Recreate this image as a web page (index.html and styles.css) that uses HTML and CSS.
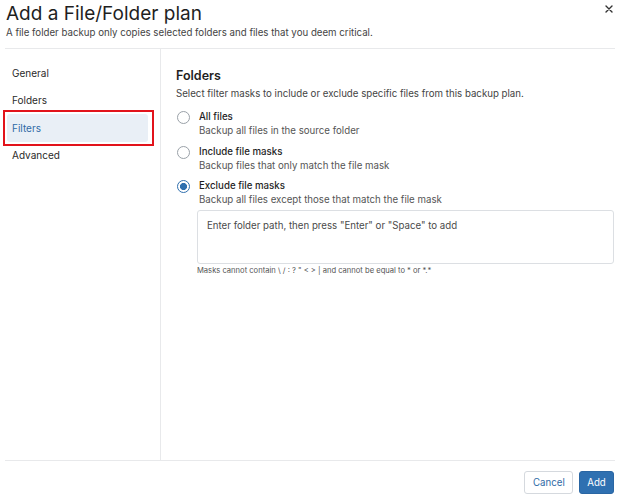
FILE: index.html
```html
<!DOCTYPE html>
<html lang="en">
<head>
<meta charset="utf-8">
<title>Add a File/Folder plan</title>
<link rel="stylesheet" href="styles.css">
</head>
<body>
<div class="dialog">
  <header class="header">
    <div class="title-row">
      <h1 class="title">Add a File/Folder plan</h1>
      <button class="close" aria-label="Close">
        <svg width="8" height="8" viewBox="0 0 8 8"><path d="M1 1L7 7M7 1L1 7" stroke="#333" stroke-width="1.4" stroke-linecap="round"/></svg>
      </button>
    </div>
    <p class="subtitle">A file folder backup only copies selected folders and files that you deem critical.</p>
  </header>
  <div class="body">
    <nav class="nav">
      <div class="nav-item">General</div>
      <div class="nav-item">Folders</div>
      <div class="nav-item active">Filters</div>
      <div class="nav-item">Advanced</div>
    </nav>
    <section class="content">
      <h2 class="section-title">Folders</h2>
      <p class="section-desc">Select filter masks to include or exclude specific files from this backup plan.</p>
      <div class="options">
        <label class="option">
          <span class="radio"></span>
          <span class="option-text">
            <span class="option-label">All files</span>
            <span class="option-desc">Backup all files in the source folder</span>
          </span>
        </label>
        <label class="option">
          <span class="radio"></span>
          <span class="option-text">
            <span class="option-label">Include file masks</span>
            <span class="option-desc">Backup files that only match the file mask</span>
          </span>
        </label>
        <label class="option">
          <span class="radio checked"></span>
          <span class="option-text">
            <span class="option-label">Exclude file masks</span>
            <span class="option-desc">Backup all files except those that match the file mask</span>
          </span>
        </label>
      </div>
      <div class="mask-field">
        <div class="mask-input">Enter folder path, then press "Enter" or "Space" to add</div>
        <div class="mask-note">Masks cannot contain \ / : ? " &lt; &gt; | and cannot be equal to * or *.*</div>
      </div>
    </section>
  </div>
  <footer class="footer">
    <button class="btn btn-secondary">Cancel</button>
    <button class="btn btn-primary">Add</button>
  </footer>
</div>
</body>
</html>
```
FILE: styles.css
```css
* { box-sizing: border-box; }
html, body { margin: 0; padding: 0; background: #fff; }
body {
  font-family: Inter, "Noto Sans", "Liberation Sans", sans-serif;
  color: #222;
  width: 624px;
  height: 502px;
  overflow: hidden;
}
.dialog {
  width: 624px;
  height: 502px;
  padding: 0 9px 0 5px;
  display: flex;
  flex-direction: column;
}
.header {
  padding: 3px 0 0 1px;
  height: 49px;
  border-bottom: 1px solid #e8e9eb;
}
.title-row {
  display: flex;
  justify-content: space-between;
  align-items: flex-start;
}
.title {
  margin: 0;
  font-size: 19px;
  font-weight: 400;
  line-height: 22px;
  color: #1f1f1f;
}
.close {
  border: 0;
  background: none;
  padding: 0;
  margin: 1px 0 0 0;
  width: 12px;
  height: 10px;
  display: flex;
  align-items: center;
  justify-content: center;
}
.subtitle {
  margin: 1px 0 0;
  font-size: 9.7px;
  line-height: 14px;
  color: #444;
}
.body {
  display: flex;
  height: 412px;
  border-bottom: 1px solid #e8e9eb;
}
.nav {
  width: 156px;
  border-right: 1px solid #e8e9eb;
  padding-top: 10px;
  flex-shrink: 0;
}
.nav-item {
  height: 27.5px;
  margin: 0 12px 0 2px;
  padding-left: 5px;
  display: flex;
  align-items: center;
  font-size: 10px;
  color: #2a2a2a;
  border-radius: 3px;
}
.nav-item.active {
  background: #e9eff6;
  color: #2f6aa6;
  position: relative;
}
.nav-item.active::after {
  content: "";
  position: absolute;
  top: -4px;
  bottom: -4px;
  left: -4px;
  right: -6px;
  border: 2px solid #e2131b;
}
.content {
  flex: 1;
  padding: 18px 0 0 15px;
}
.section-title {
  margin: 0;
  font-size: 12.5px;
  font-weight: 600;
  line-height: 17px;
  color: #1f1f1f;
}
.section-desc {
  margin: 3px 0 0;
  font-size: 9.7px;
  line-height: 14px;
  color: #444;
}
.options {
  margin-top: 9px;
  display: flex;
  flex-direction: column;
  gap: 7.5px;
}
.option {
  display: flex;
  align-items: flex-start;
  gap: 9px;
}
.radio {
  width: 13px;
  height: 13px;
  border: 1px solid #9aa1a8;
  border-radius: 50%;
  margin: 1px 0 0 1px;
  flex-shrink: 0;
  background: #fff;
}
.radio.checked {
  border-color: #2f6fae;
  background: radial-gradient(circle, #2f6fae 0 3.3px, #fff 3.8px);
}
.option-text {
  display: flex;
  flex-direction: column;
}
.option-label {
  font-size: 9.7px;
  line-height: 14px;
  font-weight: 500;
  color: #1f1f1f;
}
.option-desc {
  font-size: 9.7px;
  line-height: 13px;
  color: #555;
}
.mask-field {
  margin: 4px 1px 0 21px;
}
.mask-input {
  height: 54px;
  border: 1px solid #dcdfe3;
  border-radius: 3px;
  padding: 8px 9px;
  font-size: 9.7px;
  line-height: 14px;
  color: #4a4a4a;
}
.mask-note {
  margin-top: 1px;
  font-size: 7.6px;
  line-height: 11px;
  color: #555;
}
.footer {
  display: flex;
  justify-content: flex-end;
  gap: 6px;
  padding-top: 10px;
  padding-right: 1px;
}
.btn {
  height: 23px;
  border-radius: 3px;
  font-family: inherit;
  font-size: 9.7px;
  padding: 0 8px;
  cursor: pointer;
}
.btn-secondary {
  background: #fff;
  border: 1px solid #d5d9de;
  color: #2f6aa6;
  width: 49px;
}
.btn-primary {
  background: #2f70b1;
  border: 1px solid #2a66a3;
  color: #fff;
  width: 35px;
  padding: 0;
}
```
